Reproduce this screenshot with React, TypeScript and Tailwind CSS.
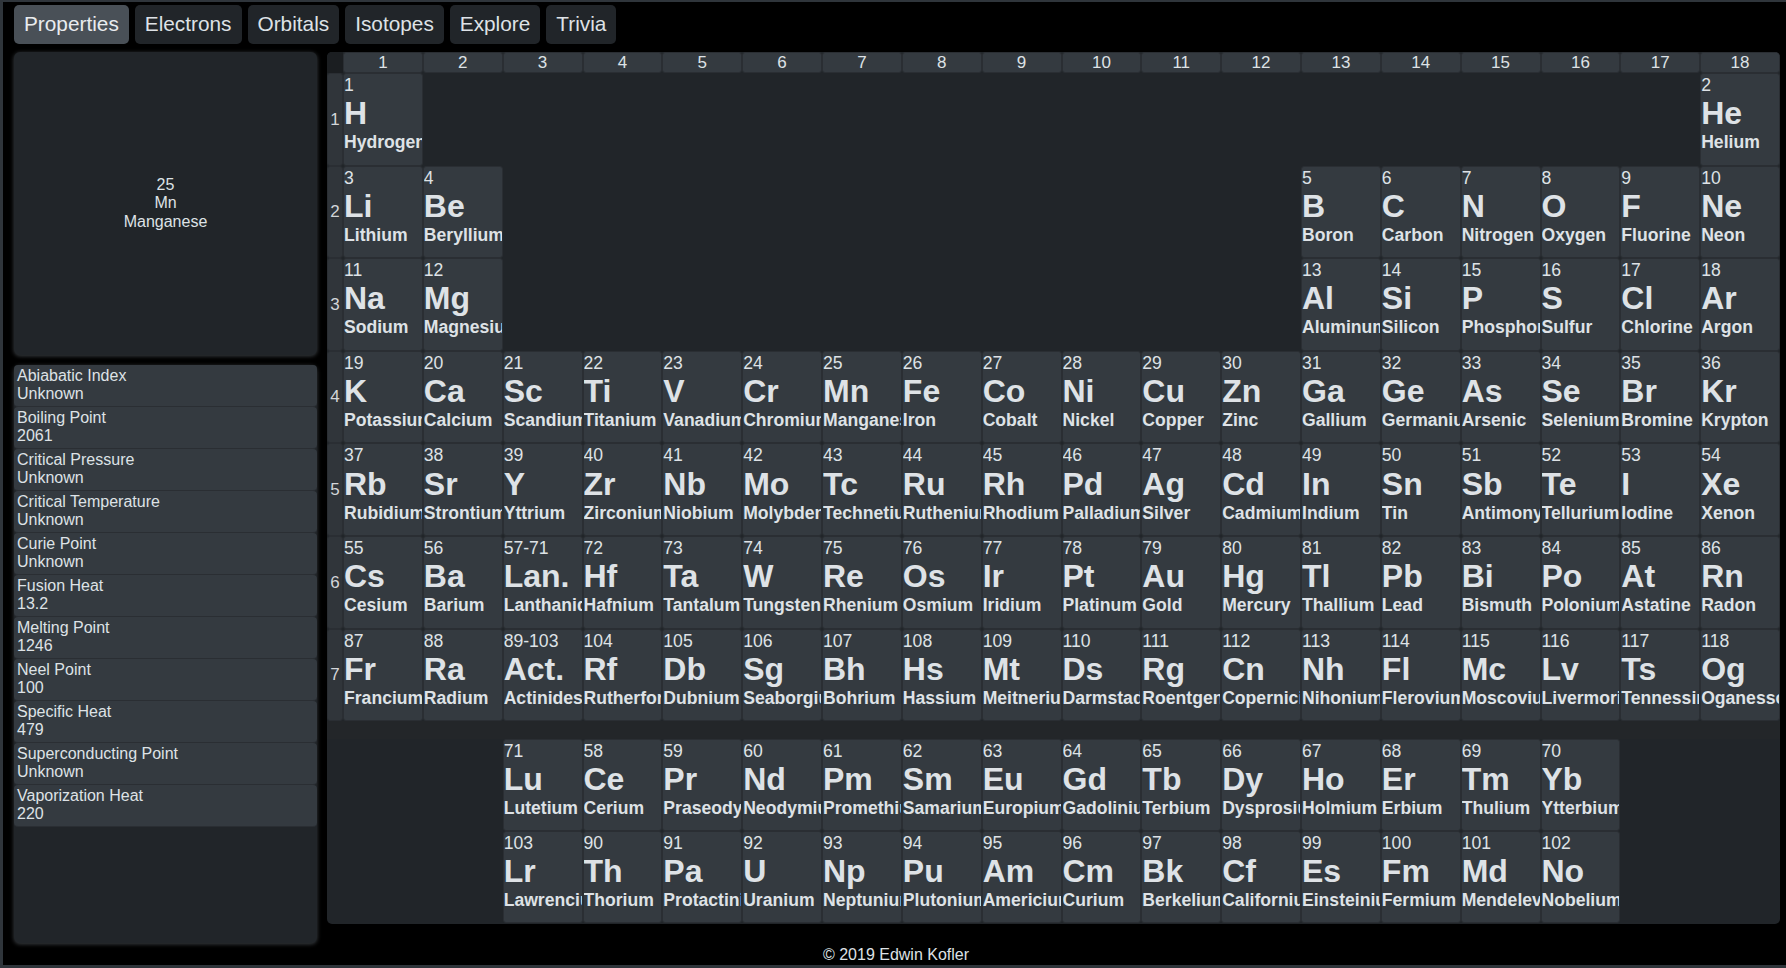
type El = { n: string; s: string; name: string } | null

const e = (n: string, s: string, name: string): El => ({ n, s, name })
const blank = (k: number): El[] => Array.from({ length: k }, () => null)

const rows: El[][] = [
  [e("1", "H", "Hydrogen"), ...blank(16), e("2", "He", "Helium")],
  [
    e("3", "Li", "Lithium"), e("4", "Be", "Beryllium"), ...blank(10),
    e("5", "B", "Boron"), e("6", "C", "Carbon"), e("7", "N", "Nitrogen"),
    e("8", "O", "Oxygen"), e("9", "F", "Fluorine"), e("10", "Ne", "Neon"),
  ],
  [
    e("11", "Na", "Sodium"), e("12", "Mg", "Magnesium"), ...blank(10),
    e("13", "Al", "Aluminum"), e("14", "Si", "Silicon"), e("15", "P", "Phosphorus"),
    e("16", "S", "Sulfur"), e("17", "Cl", "Chlorine"), e("18", "Ar", "Argon"),
  ],
  [
    e("19", "K", "Potassium"), e("20", "Ca", "Calcium"), e("21", "Sc", "Scandium"),
    e("22", "Ti", "Titanium"), e("23", "V", "Vanadium"), e("24", "Cr", "Chromium"),
    e("25", "Mn", "Manganese"), e("26", "Fe", "Iron"), e("27", "Co", "Cobalt"),
    e("28", "Ni", "Nickel"), e("29", "Cu", "Copper"), e("30", "Zn", "Zinc"),
    e("31", "Ga", "Gallium"), e("32", "Ge", "Germanium"), e("33", "As", "Arsenic"),
    e("34", "Se", "Selenium"), e("35", "Br", "Bromine"), e("36", "Kr", "Krypton"),
  ],
  [
    e("37", "Rb", "Rubidium"), e("38", "Sr", "Strontium"), e("39", "Y", "Yttrium"),
    e("40", "Zr", "Zirconium"), e("41", "Nb", "Niobium"), e("42", "Mo", "Molybdenum"),
    e("43", "Tc", "Technetium"), e("44", "Ru", "Ruthenium"), e("45", "Rh", "Rhodium"),
    e("46", "Pd", "Palladium"), e("47", "Ag", "Silver"), e("48", "Cd", "Cadmium"),
    e("49", "In", "Indium"), e("50", "Sn", "Tin"), e("51", "Sb", "Antimony"),
    e("52", "Te", "Tellurium"), e("53", "I", "Iodine"), e("54", "Xe", "Xenon"),
  ],
  [
    e("55", "Cs", "Cesium"), e("56", "Ba", "Barium"), e("57-71", "Lan.", "Lanthanides"),
    e("72", "Hf", "Hafnium"), e("73", "Ta", "Tantalum"), e("74", "W", "Tungsten"),
    e("75", "Re", "Rhenium"), e("76", "Os", "Osmium"), e("77", "Ir", "Iridium"),
    e("78", "Pt", "Platinum"), e("79", "Au", "Gold"), e("80", "Hg", "Mercury"),
    e("81", "Tl", "Thallium"), e("82", "Pb", "Lead"), e("83", "Bi", "Bismuth"),
    e("84", "Po", "Polonium"), e("85", "At", "Astatine"), e("86", "Rn", "Radon"),
  ],
  [
    e("87", "Fr", "Francium"), e("88", "Ra", "Radium"), e("89-103", "Act.", "Actinides"),
    e("104", "Rf", "Rutherfordium"), e("105", "Db", "Dubnium"), e("106", "Sg", "Seaborgium"),
    e("107", "Bh", "Bohrium"), e("108", "Hs", "Hassium"), e("109", "Mt", "Meitnerium"),
    e("110", "Ds", "Darmstadtium"), e("111", "Rg", "Roentgenium"), e("112", "Cn", "Copernicium"),
    e("113", "Nh", "Nihonium"), e("114", "Fl", "Flerovium"), e("115", "Mc", "Moscovium"),
    e("116", "Lv", "Livermorium"), e("117", "Ts", "Tennessine"), e("118", "Og", "Oganesson"),
  ],
]

const fBlock: El[][] = [
  [
    ...blank(2),
    e("71", "Lu", "Lutetium"), e("58", "Ce", "Cerium"), e("59", "Pr", "Praseodymium"),
    e("60", "Nd", "Neodymium"), e("61", "Pm", "Promethium"), e("62", "Sm", "Samarium"),
    e("63", "Eu", "Europium"), e("64", "Gd", "Gadolinium"), e("65", "Tb", "Terbium"),
    e("66", "Dy", "Dysprosium"), e("67", "Ho", "Holmium"), e("68", "Er", "Erbium"),
    e("69", "Tm", "Thulium"), e("70", "Yb", "Ytterbium"), ...blank(2),
  ],
  [
    ...blank(2),
    e("103", "Lr", "Lawrencium"), e("90", "Th", "Thorium"), e("91", "Pa", "Protactinium"),
    e("92", "U", "Uranium"), e("93", "Np", "Neptunium"), e("94", "Pu", "Plutonium"),
    e("95", "Am", "Americium"), e("96", "Cm", "Curium"), e("97", "Bk", "Berkelium"),
    e("98", "Cf", "Californium"), e("99", "Es", "Einsteinium"), e("100", "Fm", "Fermium"),
    e("101", "Md", "Mendelevium"), e("102", "No", "Nobelium"), ...blank(2),
  ],
]

const props = [
  ["Abiabatic Index", "Unknown"],
  ["Boiling Point", "2061"],
  ["Critical Pressure", "Unknown"],
  ["Critical Temperature", "Unknown"],
  ["Curie Point", "Unknown"],
  ["Fusion Heat", "13.2"],
  ["Melting Point", "1246"],
  ["Neel Point", "100"],
  ["Specific Heat", "479"],
  ["Superconducting Point", "Unknown"],
  ["Vaporization Heat", "220"],
]

const tabs = ["Properties", "Electrons", "Orbitals", "Isotopes", "Explore", "Trivia"]

function Cell({ el }: { el: El }) {
  if (!el) return <div />
  return (
    <div className="overflow-hidden whitespace-nowrap rounded-[3px] border border-[#2a2e33] bg-[#343a40] pt-px text-[#dee2e6]">
      <div className="text-[17.6px] leading-[20.2px]">{el.n}</div>
      <div className="text-[32px] font-bold leading-[37px]">{el.s}</div>
      <div className="text-[17.6px] font-bold leading-[20.2px]">{el.name}</div>
    </div>
  )
}

export default function App() {
  return (
    <div className="flex h-[968px] w-full flex-col overflow-hidden border-t-2 border-b-[3px] border-l-[3px] border-[#2f353b] bg-black pl-[11px] pt-[3px] font-['Liberation_Sans',Arial,sans-serif] text-[#dee2e6]">
      {/* Tabs */}
      <div className="flex gap-[6px]">
        {tabs.map((t, i) => (
          <button
            key={t}
            className={
              "h-[39px] rounded-[5px] px-[10px] pb-px text-[20.8px] " +
              (i === 0 ? "bg-[#495057] text-[#e9ecef]" : "bg-[#212529] text-[#dee2e6]")
            }
          >
            {t}
          </button>
        ))}
      </div>

      <div className="mt-[8px] flex gap-[10px]">
        {/* Left column */}
        <div className="flex w-[303px] flex-col gap-[10px]">
          <div className="flex h-[303px] flex-col items-center justify-center rounded-[6px] bg-[#212529] text-[16px] leading-[18.4px] shadow-[0_1px_4px_rgba(110,118,126,0.55)]">
            <div>25</div>
            <div>Mn</div>
            <div>Manganese</div>
          </div>
          <div className="h-[578px] rounded-[6px] bg-[#212529] shadow-[0_1px_4px_rgba(110,118,126,0.55)]">
            {props.map(([k, v]) => (
              <div
                key={k}
                className="h-[42px] rounded-[4px] border-b border-[#2a2e33] bg-[#343a40] px-[3px] pt-[2px] text-[16px] leading-[18.4px]"
              >
                <div>{k}</div>
                <div>{v}</div>
              </div>
            ))}
          </div>
        </div>

        {/* Periodic table */}
        <div className="grid h-[872px] w-[1453px] grid-cols-[16px_repeat(18,minmax(0,1fr))] grid-rows-[21px_repeat(7,92.6px)_18px_repeat(2,92px)] self-start overflow-hidden rounded-[5px] bg-[#212529]">
          <div className="bg-[#1b1e21]" />
          {Array.from({ length: 18 }, (_, i) => (
            <div
              key={i}
              className="flex items-center justify-center rounded-[3px] border border-[#2a2e33] bg-[#343a40] text-[17px]"
            >
              {i + 1}
            </div>
          ))}
          {rows.map((r, ri) => [
            <div
              key={"l" + ri}
              className="flex items-center justify-center rounded-[3px] border border-[#2a2e33] bg-[#30353a] text-[17px] text-[#d3d6d9]"
            >
              {ri + 1}
            </div>,
            ...r.map((el, ci) => <Cell key={ri + "-" + ci} el={el} />),
          ])}
          <div className="col-span-19 bg-[#232629]" />
          {fBlock.map((r, ri) => [
            <div key={"fl" + ri} />,
            ...r.map((el, ci) => <Cell key={"f" + ri + "-" + ci} el={el} />),
          ])}
        </div>
      </div>

      {/* Footer */}
      <div className="flex flex-1 items-center justify-center pr-[8px] text-[16px]">© 2019 Edwin Kofler</div>
    </div>
  )
}
